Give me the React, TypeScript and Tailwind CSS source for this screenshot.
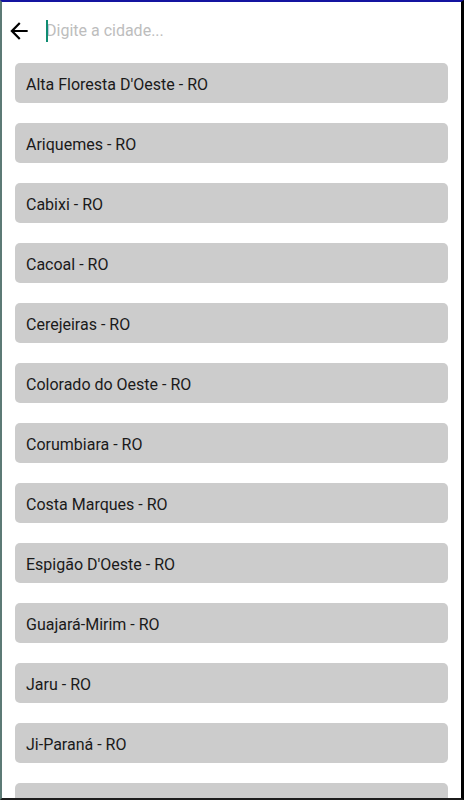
import { useState } from 'react';

const cities = [
  "Alta Floresta D'Oeste",
  'Ariquemes',
  'Cabixi',
  'Cacoal',
  'Cerejeiras',
  'Colorado do Oeste',
  'Corumbiara',
  'Costa Marques',
  "Espigão D'Oeste",
  'Guajará-Mirim',
  'Jaru',
  'Ji-Paraná',
  "Machadinho D'Oeste",
  "Nova Brasilândia D'Oeste",
];

export default function App() {
  const [query, setQuery] = useState('');

  const filtered = cities.filter((c) => c.toLowerCase().includes(query.toLowerCase()));

  return (
    <div
      className="w-[464px] h-[800px] overflow-hidden bg-white flex flex-col border-t-2 border-t-[#1414a0] border-l-2 border-l-[#5c7a75] border-r-[3px] border-r-black border-b-2 border-b-[#1c1c1c]"
      style={{ fontFamily: 'Roboto, "Noto Sans", sans-serif' }}
    >
      {/* Search header */}
      <div className="h-[57px] shrink-0 flex items-center pl-[4px] pr-4">
        <button className="w-[26px] h-[26px] flex items-center justify-center text-black">
          <svg width="26" height="26" viewBox="0 0 24 24" fill="currentColor">
            <path d="M20 11H7.83l5.59-5.59L12 4l-8 8 8 8 1.41-1.41L7.83 13H20v-2z" />
          </svg>
        </button>
        <div className="relative ml-[14px] flex-1 h-[22px] flex items-center">
          {query === '' && (
            <span className="absolute left-0 top-0 w-[2px] h-[22px] bg-[#0f8c72]" />
          )}
          <input
            value={query}
            onChange={(e) => setQuery(e.target.value)}
            placeholder="Digite a cidade..."
            className="w-full bg-transparent outline-none text-[16px] text-[#222] placeholder:text-[#bdbdbd] caret-[#0f8c72]"
          />
        </div>
      </div>

      {/* City list */}
      <div className="flex flex-col gap-5 pt-[4px] px-[13px]">
        {filtered.map((city) => (
          <div
            key={city}
            className="h-10 shrink-0 rounded-[5px] bg-[#cccccc] flex items-center pt-[3px] px-[11px] text-[16px] text-[#1a1a1a]"
          >
            {city} - RO
          </div>
        ))}
      </div>
    </div>
  );
}
